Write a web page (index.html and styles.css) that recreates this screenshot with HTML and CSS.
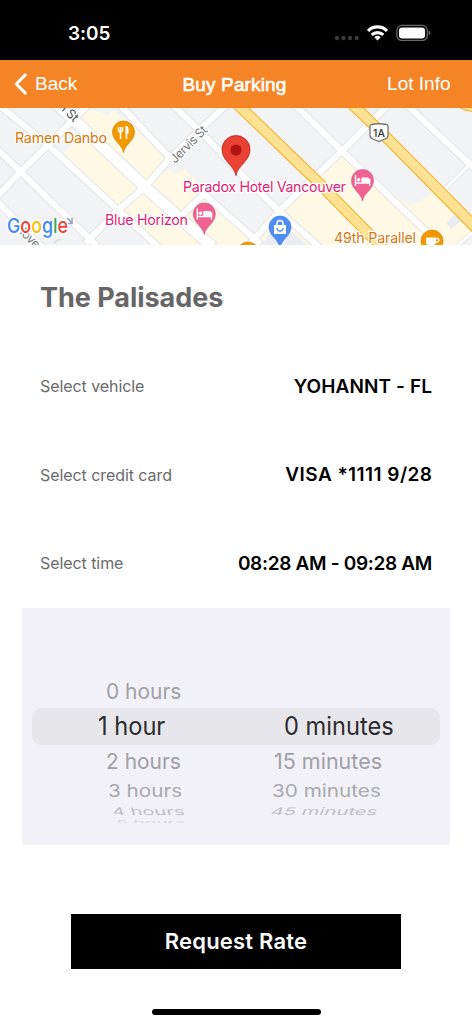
FILE: index.html
```
<!DOCTYPE html>
<html lang="en">
<head>
<meta charset="utf-8">
<title>Buy Parking</title>
<link rel="stylesheet" href="styles.css">
</head>
<body>
<div class="screen">
  <header class="status">
    <span class="clock">3:05</span>
    <svg class="status-icons" width="100" height="24" viewBox="332 21 100 24">
      <g fill="#3b3b3b"><circle cx="337" cy="38" r="2.2"/><circle cx="343.5" cy="38" r="2.2"/><circle cx="350" cy="38" r="2.2"/><circle cx="356.700" cy="38" r="2.2"/></g>
      <g fill="none" stroke="#fff" stroke-width="3.1"><path d="M368 30.800a13.500 13.500 0 0 1 19 0"/><path d="M371.700 34.900a8.400 8.400 0 0 1 11.600 0"/></g>
      <path d="M374.300 37.300a4.700 4.700 0 0 1 6.400 0L377.500 40.500z" fill="#fff"/>
      <rect x="396.900" y="25.400" width="30.400" height="15" rx="5" fill="none" stroke="#6b6b6b" stroke-width="1.300"/>
      <rect x="399" y="27.400" width="26" height="11" rx="3.200" fill="#fff"/>
      <path d="M428.700 30.500q1.800.8 1.800 2.400t-1.800 2.400z" fill="#6b6b6b"/>
    </svg>
  </header>
  <nav class="nav">
    <a class="back"><svg width="13" height="22" viewBox="0 0 13 22"><path d="M11.300 1.900 2.300 11l9 9.100" fill="none" stroke="#fff" stroke-width="3" stroke-linecap="round" stroke-linejoin="round"/></svg><span>Back</span></a>
    <h1 class="nav-title">Buy Parking</h1>
    <a class="lot">Lot Info</a>
  </nav>
  <svg class="map" width="472" height="137" viewBox="0 108 472 137">
    <defs>
      <g id="bed"><path d="M-7-5.500v11M7.200-1.500v7M-7 2.500H7" stroke="#fff" stroke-width="1.400" fill="none"/><path d="M-1-3h5.500q2.700 0 2.700 2.700V2.500H-1z" fill="#fff"/><circle cx="-3.900" cy="-.8" r="1.800" fill="#fff"/></g>
      <path id="pin" d="M0 20.500C-1.500 12-11 9-11 0A11 11 0 0 1 11 0C11 9 1.500 12 0 20.500z"/>
    </defs>
    <rect y="108" width="472" height="137" fill="#f1f3f5"/>
    <g fill="#fef8e5">
      <path d="M88 108 108 115 113 110 170 159 118 210 62 155 84 133 74 121z"/>
      <path d="M146 190 166 170 179 173 184 169 204 188 265 245H162L118 211z"/>
      <path d="M118 211 162 245 150 243 118 211z"/>
      <path d="M120 213 146 190 206 245H156L150 240z"/>
      <path d="M342 152 408 205 418 202 438 190 475 228 459 245H240L279 212z"/>
    </g>
    <path d="M446 223 454 215 462 220 451 229zM262 245l16-24 30 24z" fill="#e9ecf0"/>
    <g fill="none" stroke="#e1e3e6" stroke-linecap="square">
      <path stroke-width="8" d="M-4 148 95 244M-4 198 20 172 48 145 85 108M0 106 48 145 156 245M88 241 118 210 145 187 170 158 223 108M120 105 170 158M172 104 204 135 236 169 279 211 318 246M204 194 258 242M178 219 204 194M250 244 279 211 342 151 388 105M297 107 342 151 432 237M408 106 476 170M-4 200 40 245"/>
      <path stroke-width="13" d="M58 105 145 187 208 243"/>
      <path stroke-width="4.500" d="M476 158 443 191M455 248 476 229"/>
    </g>
    <g fill="none" stroke="#fff" stroke-linecap="square">
      <path stroke-width="6" d="M-4 148 95 244M-4 198 20 172 48 145 85 108M0 106 48 145 156 245M88 241 118 210 145 187 170 158 223 108M120 105 170 158M172 104 204 135 236 169 279 211 318 246M204 194 258 242M178 219 204 194M250 244 279 211 342 151 388 105M297 107 342 151 432 237M408 106 476 170M-4 200 40 245"/>
      <path stroke-width="11" d="M58 105 145 187 208 243"/>
      <path stroke-width="3" d="M476 158 443 191M455 248 476 229"/>
    </g>
    <g fill="none" stroke-linecap="square">
      <path stroke="#f3b32d" stroke-width="11.500" d="M235 102 316 180 372 237 382 247M350 102 385 136 476 228"/>
      <path stroke="#fde293" stroke-width="9.300" d="M235 102 316 180 372 237 382 247M350 102 385 136 476 228"/>
      <path stroke="#f3b32d" stroke-width="5" d="M461 106q7 4 14 3"/><path stroke="#fde293" stroke-width="3" d="M461 106q7 4 14 3"/>
    </g>
    <path d="m67 218 5 5m0-5v5.500h-5" fill="none" stroke="#9aa3bb" stroke-width="1.600"/>
    <path d="M54 244q2-5 7-4" fill="none" stroke="#d8dbe0" stroke-width="1.500"/>
    <g class="street">
      <text transform="translate(58 107) rotate(45)" textLength="22">n St</text>
      <text transform="translate(175 164) rotate(-45)" textLength="47" class="soft">Jervis St</text>
      <text transform="translate(19 233) rotate(45)" textLength="34" class="soft">lovers</text>
    </g>
    <g class="poi">
      <text x="15" y="143" textLength="92" fill="#d9780b">Ramen Danbo</text>
      <text x="183" y="191.500" textLength="163" fill="#e21e74">Paradox Hotel Vancouver</text>
      <text x="105" y="224.500" textLength="83" fill="#e21e74">Blue Horizon</text>
      <text x="334" y="242.500" textLength="82" fill="#d9780b">49th Parallel</text>
    </g>
    <g transform="translate(123.500 132)"><use href="#pin" fill="#f29900" stroke="#c97b00" stroke-width=".6"/><path d="M-5-5v3q0 2 2 2t2-2v-3M-3-5V7M3-5v12" fill="none" stroke="#fff" stroke-width="1.500"/><path d="M2-6q3 0 3 3v5H2z" fill="#fff"/></g>
    <g transform="translate(204.300 214)"><use href="#pin" fill="#f06292" stroke="#d14a7b" stroke-width=".6"/><use href="#bed"/></g>
    <g transform="translate(362.500 180.500)"><use href="#pin" fill="#f06292" stroke="#d14a7b" stroke-width=".6"/><use href="#bed"/></g>
    <g transform="translate(280 227)"><use href="#pin" fill="#4f8df5" stroke="#3c78dc" stroke-width=".6"/><path d="M-6-2H6V7H-6z" fill="#fff"/><path d="M-3-2v-1.500a3 3 0 0 1 6 0V-2" fill="none" stroke="#fff" stroke-width="1.500"/><path d="M-3 1q0 3 3 3t3-3" fill="none" stroke="#4f8df5" stroke-width="1.300"/></g>
    <g transform="translate(432 241)"><circle r="11" fill="#f29900" stroke="#c97b00" stroke-width=".6"/><path d="M-6-3.500H4V1q0 3-3 3h-4q-3 0-3-3z" fill="#fff"/><path d="M4-2.500h1.200a1.700 1.700 0 0 1 0 3.500H4" fill="none" stroke="#fff" stroke-width="1.300"/></g>
    <circle cx="248" cy="253" r="11" fill="#f29900" stroke="#c97b00" stroke-width=".6"/>
    <g transform="translate(236 150)"><path d="M0 25.500C-2 15-14 11-14-.5A14 14 0 0 1 14-.5C14 11 2 15 0 25.500z" fill="#ea4335" stroke="#b8201b" stroke-width=".8"/><circle r="5.600" fill="#b31412"/></g>
    <path d="M371.500 124.500q7.500-1.500 15 0 1.500 0 1.500 2v9q0 2.500-3 3.500l-6 2.500-6-2.500q-3-1-3-3.500v-9q0-2 1.500-2z" fill="#fff" stroke="#74777b" stroke-width="1.300"/>
    <text x="379" y="137" text-anchor="middle" class="shield">1A</text>
    <text x="7" y="233" textLength="61" lengthAdjust="spacingAndGlyphs" class="google"><tspan fill="#4285f4">G</tspan><tspan fill="#ea4335">o</tspan><tspan fill="#fbbc05">o</tspan><tspan fill="#4285f4">g</tspan><tspan fill="#34a853">l</tspan><tspan fill="#ea4335">e</tspan></text>
  </svg>
  <main class="details">
    <h2 class="lot-name">The Palisades</h2>
    <div class="field"><span class="label">Select vehicle</span><span class="value vehicle">YOHANNT - FL</span></div>
    <div class="field"><span class="label">Select credit card</span><span class="value card">VISA *1111 9/28</span></div>
    <div class="field"><span class="label">Select time</span><span class="value time">08:28 AM - 09:28 AM</span></div>
  </main>
  <section class="picker">
    <div class="wheel hours">
      <div class="item near"><span>0 hours</span></div>
      <div class="item current"><span>1 hour</span></div>
      <div class="item near"><span>2 hours</span></div>
      <div class="item far"><span>3 hours</span></div>
      <div class="item farther"><span>4 hours</span></div>
      <div class="item edge"><span>5 hours</span></div>
    </div>
    <div class="wheel minutes">
      <div class="item near"></div>
      <div class="item current"><span>0 minutes</span></div>
      <div class="item near"><span>15 minutes</span></div>
      <div class="item far"><span>30 minutes</span></div>
      <div class="item farther"><span>45 minutes</span></div>
    </div>
  </section>
  <button class="request">Request Rate</button>
  <div class="home"></div>
</div>
</body>
</html>
```
FILE: styles.css
```
* { box-sizing: border-box; }
body { margin: 0; background: #fff; font-family: Inter, sans-serif; }
.screen { width: 472px; height: 1024px; display: flex; flex-direction: column; overflow: hidden; }
.status { height: 60px; flex: none; background: #000; color: #fff; display: flex; justify-content: space-between; align-items: flex-start; padding: 21px 40px 0 68px; }
.clock { font-size: 19px; font-weight: 600; line-height: 25px; letter-spacing: -0.1px; }
.nav { height: 48px; flex: none; background: #f58426; color: #fff; display: grid; grid-template-columns: 1fr auto 1fr; align-items: center; padding: 0 21px 0 14px; font: 19px/48px "Liberation Sans", sans-serif; }
.back { display: flex; align-items: center; gap: 8px; }
.nav-title { margin: 0; padding-left: 5px; font-size: 19px; line-height: 47px; font-weight: 400; -webkit-text-stroke: 0.6px #fff; letter-spacing: 0.15px; }
.nav-title, .lot { transform: translateX(-0.5px); }
.lot { text-align: right; }
.map { display: block; flex: none; }
.map text { font-family: Inter, sans-serif; paint-order: stroke; stroke: #fff; stroke-width: 2.5px; stroke-linejoin: round; }
.poi text { font-size: 14.3px; }
.street text { font-size: 12.5px; fill: #4c5156; }
.street .soft { fill: #73777c; }
.map .shield { font: 500 10.5px Inter, sans-serif; fill: #333; stroke: none; }
.map .google { font: 500 20.5px Inter, sans-serif; stroke-width: 3px; }
.details { height: 363px; flex: none; padding: 36px 40px 0; }
.lot-name { margin: 0 0 27px; font-size: 27px; line-height: 34px; font-weight: 700; color: #666; letter-spacing: -0.03px; }
.field { display: flex; justify-content: space-between; align-items: center; height: 88.500px; }
.label { font-size: 16px; color: #6a6a6a; letter-spacing: -0.07px; }
.value { font-size: 19px; font-weight: 600; color: #000; }
.vehicle { letter-spacing: 0.1px; }
.card { letter-spacing: 0.45px; margin-right: -0.45px; }
.time { letter-spacing: -0.32px; }
.picker { position: relative; flex: none; width: 428px; height: 237px; margin-left: 22px; padding-top: 65px; background: #f2f1f7; display: grid; grid-template-columns: 1fr 1fr; }
.picker::before { content: ""; position: absolute; left: 10px; top: 100px; width: 408px; height: 37px; border-radius: 9px; background: #e7e6eb; }
.wheel { position: relative; display: flex; flex-direction: column; height: 150px; overflow: hidden; }
.item { display: flex; flex: none; white-space: nowrap; font-size: 23px; color: #a0a0a5; align-items: center; }
.item span { display: block; transform-origin: 0 50%; line-height: 30px; }
.near { height: 35px; }
.current { height: 35px; font-size: 25px; color: #2c2c2e; }
.far { height: 26px; color: #a8a8ad; }
.farther { height: 14px; color: #bebec3; }
.edge { height: 7px; color: #d8d8dc; }
.hours .near { padding-left: 84px; }
.hours .current { padding-left: 76px; }
.hours .far { padding-left: 86px; }
.hours .farther { padding-left: 90px; }
.hours .edge { padding-left: 94px; }
.minutes .near { padding-left: 38px; }
.minutes .current { padding-left: 48px; }
.minutes .far { padding-left: 36px; }
.minutes .farther { padding-left: 35px; }
.near span { transform: scale(0.91, 0.95); }
.minutes .near span { transform: scale(0.935, 0.95); }
.current span { transform: scale(0.945, 1); }
.far span { transform: scale(0.9, 0.75); }
.farther span { transform: scale(0.87, 0.45) skewX(8deg); }
.minutes .farther span { transform: scale(0.88, 0.45) skewX(-12deg); }
.edge span { transform: scale(0.84, 0.2); }
.request { flex: none; width: 330px; height: 55px; margin: 69px 0 0 71px; padding: 0 0 2px; border: 0; background: #000; color: #fff; font: 600 22px Inter, sans-serif; letter-spacing: 0.2px; }
.home { flex: none; width: 169px; height: 6px; margin: 40px 0 0 151.500px; border-radius: 3px; background: #000; }
```
